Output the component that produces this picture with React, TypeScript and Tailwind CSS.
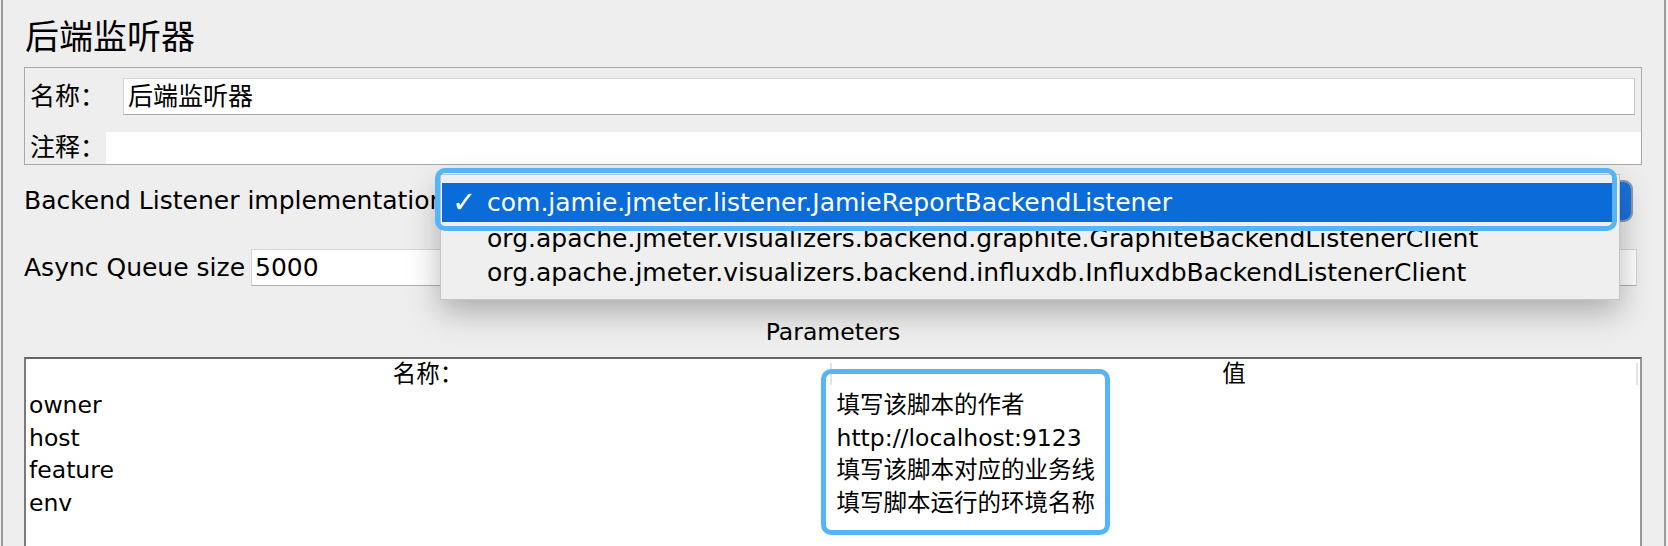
import React from "react";

const FONT = { fontFamily: '"DejaVu Sans", "Noto Sans CJK SC", sans-serif' };

const rows: [string, string][] = [
  ["owner", "填写该脚本的作者"],
  ["host", "http://localhost:9123"],
  ["feature", "填写该脚本对应的业务线"],
  ["env", "填写脚本运行的环境名称"],
];

export default function App() {
  return (
    <div
      className="relative w-[1668px] h-[546px] overflow-hidden bg-[#eeeeee] text-black"
      style={FONT}
    >
      <div className="ml-[1px] w-[1665px] h-full border-l-2 border-r-2 border-[#9b9b9b] pl-[21px] pr-[22px] flex flex-col">
        {/* Title */}
        <div className="mt-[17px] h-[40px] leading-[40px] text-[34px] pl-[1px]">后端监听器</div>

        {/* Name / comment panel */}
        <div className="mt-[10px] h-[98px] border border-[#a8a8a8] flex flex-col">
          <div className="mt-[10px] flex items-center h-[37px]">
            <div className="w-[98px] pl-[5px] text-[25px] leading-[37px] shrink-0">名称：</div>
            <div className="flex-1 mr-[6px] h-[37px] bg-white border border-[#d4d4d4] border-b-[#a9a9a9] border-r-[#c4c4c4] flex items-center pl-[4px] text-[25px]">
              后端监听器
            </div>
          </div>
          <div className="mt-[17px] flex items-center h-[32px]">
            <div className="w-[81px] pl-[5px] text-[25px] leading-[32px] shrink-0">注释：</div>
            <div className="flex-1 h-[32px] bg-white"></div>
          </div>
        </div>

        {/* Backend Listener implementation */}
        <div className="mt-[15px] flex items-center h-[42px]">
          <div className="w-[416px] shrink-0 whitespace-nowrap text-[25px] leading-[42px]">
            Backend Listener implementation
          </div>
          <div className="flex-1 mr-[9px] h-[42px] rounded-[9px] border-2 border-[#8e9aa6] bg-white flex justify-end overflow-hidden">
            <div className="w-[40px] h-full bg-[#1b72e0]"></div>
          </div>
        </div>

        {/* Async Queue size */}
        <div className="mt-[27px] flex items-center h-[37px]">
          <div className="w-[227px] shrink-0 whitespace-nowrap text-[25px] leading-[37px]">Async Queue size</div>
          <div className="flex-1 mr-[5px] h-[37px] bg-white border border-[#d6d6d6] border-b-[#b0b0b0] flex items-center pl-[3px] text-[25px]">
            5000
          </div>
        </div>

        {/* Parameters */}
        <div className="mt-[31px] h-[30px] leading-[30px] text-center text-[23.5px]">Parameters</div>

        {/* Table */}
        <div className="mt-[10px] flex-1 bg-white border-t-2 border-t-[#666666] border-l-2 border-l-[#7a7a7a] border-r-2 border-r-[#979797] flex flex-col text-[23.5px]">
          <div className="h-[30px] flex items-center">
            <div className="flex-1 text-center leading-[30px]">名称：</div>
            <div className="w-[2px] h-[22px] bg-[#e4e4e4]"></div>
            <div className="flex-1 text-center leading-[30px]">值</div>
            <div className="w-[2px] h-[22px] bg-[#e4e4e4] mr-[2px]"></div>
          </div>
          {rows.map(([k, v]) => (
            <div key={k} className="h-[32.5px] flex items-center">
              <div className="flex-1 pl-[3px] leading-[32.5px] whitespace-nowrap">{k}</div>
              <div className="flex-1 pl-[4px] leading-[32.5px] whitespace-nowrap">{v}</div>
            </div>
          ))}
        </div>
      </div>

      {/* Popup menu */}
      <div className="absolute left-[440px] top-[174px] w-[1180px] h-[126px] bg-[#efefef] border border-[#c4c4c4] shadow-[0_12px_30px_rgba(0,0,0,0.28)] pt-[8px] text-[25px]">
        <div className="ml-[1px] mr-[2px] h-[39px] bg-[#0a6cd9] text-white flex items-center">
          <span className="w-[45px] pl-[10px] shrink-0 text-[29px] leading-[39px]">✓</span>
          <span className="whitespace-nowrap">com.jamie.jmeter.listener.JamieReportBackendListener</span>
        </div>
        <div className="h-[34px] flex items-center pl-[46px] whitespace-nowrap">
          org.apache.jmeter.visualizers.backend.graphite.GraphiteBackendListenerClient
        </div>
        <div className="h-[34px] flex items-center pl-[46px] whitespace-nowrap">
          org.apache.jmeter.visualizers.backend.influxdb.InfluxdbBackendListenerClient
        </div>
      </div>

      {/* Annotation outlines */}
      <div className="absolute left-[435px] top-[168px] w-[1182px] h-[63px] border-[5px] border-[#56b4f9] rounded-[10px]"></div>
      <div className="absolute left-[821px] top-[369px] w-[289px] h-[166px] border-[5px] border-[#56b4f9] rounded-[10px]"></div>
    </div>
  );
}
